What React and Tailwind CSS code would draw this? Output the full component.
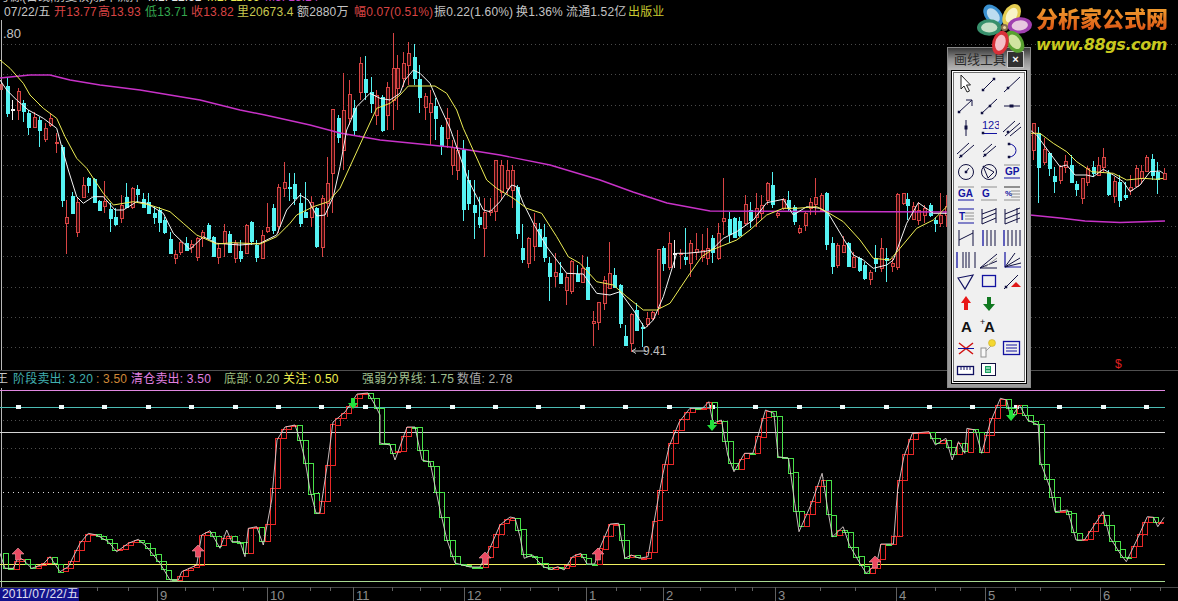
const candles = [
  [7,'c',78,86,113,117],[12,'w',100,109,110,120],[18,'r',88,91,110,120],[23,'c',100,103,111,122],[28,'c',110,113,127,135],[34,'r',112,117,127,128],[39,'c',117,120,130,147],[45,'r',123,128,139,142],[50,'r',113,118,125,127],[56,'r',133,142,143,153],
  [62,'c',145,147,200,207],[66,'r',200,217,223,254],[72,'c',192,196,213,213],[77,'r',198,202,232,237],[83,'r',177,185,197,198],[88,'c',177,178,185,193],[94,'c',178,179,202,202],[99,'c',200,201,210,211],[104,'r',181,201,206,213],[110,'c',203,209,218,232],
  [115,'c',208,217,224,226],[121,'r',195,205,218,223],[126,'c',183,197,207,207],[132,'r',187,188,207,209],[137,'c',185,189,194,203],[143,'c',193,199,207,207],[148,'c',193,202,213,214],[154,'c',207,213,217,224],[159,'c',207,210,222,232],[164,'c',217,220,232,234],
  [170,'c',232,239,253,253],[175,'r',250,254,258,264],[180,'r',240,242,252,255],[186,'c',237,243,250,251],[191,'r',240,244,247,253],[197,'r',237,238,257,261],[202,'r',230,232,238,247],[208,'c',223,225,238,239],[213,'c',236,237,256,256],[218,'r',243,248,257,264],
  [224,'r',224,231,243,257],[229,'c',231,234,252,252],[235,'r',240,243,258,263],[240,'c',240,251,258,262],[246,'r',224,225,253,254],[251,'c',221,222,241,245],[256,'c',240,245,257,262],[262,'r',230,235,258,258],[267,'r',203,227,231,233],[273,'c',204,208,230,234],
  [278,'r',184,187,226,233],[284,'r',162,182,188,197],[289,'c',173,187,188,201],[294,'c',173,184,198,205],[300,'c',193,203,223,227],[305,'c',182,212,217,217],[311,'r',196,202,217,227],[316,'c',207,208,246,248],[322,'r',195,198,247,257],[327,'r',157,183,203,217],
  [332,'r',109,109,173,213],[338,'c',115,118,137,143],[343,'r',73,110,150,170],[349,'r',80,94,118,125],[354,'c',100,108,130,135],[360,'r',57,63,92,100],[365,'c',56,79,92,100],[371,'c',77,92,103,113],[376,'r',90,95,115,125],[382,'c',95,97,130,132],
  [387,'r',82,87,115,130],[393,'r',33,68,100,130],[397,'r',55,68,88,110],[403,'r',52,63,78,87],[408,'r',42,53,65,85],[414,'c',44,57,78,85],[419,'c',65,79,97,113],[425,'r',93,96,107,120],[430,'r',90,103,112,145],[435,'c',98,106,118,140],
  [441,'c',125,127,145,155],[447,'r',108,118,138,148],[452,'r',140,147,165,175],[457,'r',130,150,170,180],[463,'c',140,150,209,221],[468,'c',170,180,203,210],[474,'c',180,205,212,239],[479,'c',197,217,224,228],[484,'r',198,212,228,257],[490,'r',198,210,212,216],
  [495,'r',160,160,211,221],[501,'r',160,165,192,200],[507,'r',160,170,188,195],[512,'r',165,170,190,208],[517,'c',185,187,233,239],[522,'c',224,248,259,263],[528,'r',237,238,263,268],[534,'r',213,223,246,261],[539,'c',223,229,246,247],[544,'c',224,237,257,262],
  [549,'c',257,263,276,301],[555,'r',253,272,276,287],[560,'c',262,273,283,284],[566,'r',273,277,290,305],[571,'r',260,261,291,294],[577,'c',265,274,281,282],[582,'r',255,268,282,283],[587,'c',257,267,299,300],[593,'r',311,321,323,346],[598,'r',302,302,322,330],
  [604,'r',276,280,303,310],[609,'r',242,273,288,289],[614,'c',268,275,287,287],[620,'c',284,285,323,328],[625,'c',325,336,345,346],[631,'r',313,314,343,352],[636,'c',303,310,330,331],[642,'c',323,327,328,347],[647,'r',312,318,324,327],[652,'r',311,312,318,320],
  [658,'r',249,249,307,315],[663,'c',246,248,263,271],[669,'r',232,243,267,270],[674,'w',240,253,254,268],[680,'r',249,253,254,269],[685,'c',228,257,259,265],[690,'r',240,243,263,277],[696,'r',233,249,252,260],[702,'r',234,250,257,262],[707,'r',228,248,258,265],
  [712,'c',235,238,252,263],[718,'r',223,233,258,260],[723,'r',178,218,221,235],[729,'c',212,219,234,243],[734,'c',217,218,237,238],[739,'c',217,221,235,237],[745,'r',195,204,223,225],[750,'c',202,210,220,228],[756,'r',193,208,217,227],[761,'r',195,205,213,220],
  [767,'r',182,183,200,205],[772,'c',172,185,204,208],[777,'r',210,213,215,218],[783,'r',198,199,208,210],[788,'c',191,200,208,212],[794,'c',205,207,221,225],[799,'r',225,228,232,234],[805,'r',212,213,225,231],[810,'r',198,202,208,215],[815,'r',178,197,204,215],
  [821,'r',193,195,210,212],[826,'c',192,193,244,250],[832,'c',237,243,266,274],[837,'r',243,245,265,268],[843,'r',236,245,252,253],[848,'c',242,243,266,267],[853,'r',252,257,267,268],[859,'c',257,258,270,272],[864,'c',262,265,278,280],[870,'r',270,272,279,285],
  [875,'c',245,258,263,272],[881,'r',238,248,268,272],[886,'c',248,258,260,282],[892,'r',258,263,266,272],[897,'r',193,194,267,270],[903,'r',193,193,203,205],[907,'c',193,199,205,220],[913,'r',202,206,219,220],[918,'r',202,210,220,225],[924,'r',205,208,215,223],
  [930,'c',203,205,215,217],[935,'c',217,220,223,232],[940,'r',193,215,223,227],[946,'r',195,206,215,227],[1033,'r',123,123,150,160],[1038,'c',127,133,167,203],[1044,'r',138,149,162,165],[1049,'c',152,153,168,176],[1054,'c',167,176,181,193],[1060,'r',165,166,180,184],
  [1065,'r',155,161,167,173],[1071,'c',155,165,182,183],[1076,'c',181,184,189,196],[1082,'r',178,178,198,204],[1087,'r',166,168,182,186],[1093,'c',161,167,173,177],[1098,'r',157,165,175,176],[1103,'r',148,157,167,172],[1108,'c',170,173,194,196],[1114,'r',177,181,196,203],
  [1119,'c',175,182,200,207],[1125,'c',182,195,197,200],[1130,'r',175,187,190,195],[1136,'r',165,168,186,187],[1141,'r',165,171,178,184],[1146,'r',155,157,171,172],[1152,'c',154,159,175,180],[1157,'c',162,172,179,194],[1164,'r',168,173,179,180],
]

const zoomed = (ox, oy, pts) => pts.map(([x, y]) => [ox + x / 3, oy + y / 3])
const toPoints = (pts) => pts.map(([x, y]) => `${x.toFixed(1)},${y.toFixed(1)}`).join(' ')

const magenta = [[0,78],[30,75],[50,75],[70,80],[100,85],[140,90],[170,95],[200,100],[240,110],[265,115],[310,125],[340,133],[380,140],[410,143],[450,147],[500,155],[550,165],[600,180],[633,192],[667,203],[710,211],[950,212],[1030,215],[1060,218],[1085,221],[1120,222.5],[1135,222],[1165,221]]

const whiteLine = [
  ...zoomed(0, 60, [[0,60],[20,90],[50,120],[85,150],[130,175],[170,205],[185,260],[205,330],[230,410],[250,430],[280,410],[310,410],[345,450],[370,450],[410,425],[440,430],[490,460],[520,520],[570,568],[610,530],[650,550],[720,555],[780,550],[830,525],[860,450],[900,405],[925,420],[950,468],[975,465],[1000,410],[1020,320]]),
  ...zoomed(0, 0, [[1040,390],[1070,320],[1110,280],[1140,295],[1170,300],[1200,280]]),
  ...zoomed(400, 0, [[15,240],[40,210],[60,220],[90,250],[120,320],[150,385]]),
  ...zoomed(400, 180, [[205,0],[230,50],[250,90],[270,95],[300,65],[335,15],[350,20],[370,70],[400,130],[440,200],[470,240],[500,280],[550,282],[590,340],[630,345],[660,335],[700,390],[735,445],[760,420],[790,350],[830,220],[860,220]]),
  ...zoomed(640, 160, [[190,275],[215,270],[250,235],[290,215],[340,180],[380,128],[430,118],[460,165],[500,140],[540,145],[565,160],[610,235],[640,285],[670,300],[700,325],[740,315],[760,300],[800,190],[835,128],[880,160],[920,160]]),
  ...zoomed(1020, 110, [[30,60],[50,75],[90,130],[120,170],[140,165],[165,195],[200,195],[220,200],[250,178],[280,195],[310,215],[330,245],[360,225],[390,185],[420,183],[430,190]]),
]

const yellowLine = [
  ...zoomed(0, 60, [[0,0],[30,25],[70,70],[90,105],[130,145],[170,175],[195,230],[230,295],[260,325],[310,400],[340,435],[400,425],[450,435],[510,455],[550,490],[590,525],[650,552],[700,548],[780,552],[830,530],[870,490],[890,465],[940,440],[985,425],[1020,385]]),
  ...zoomed(0, 0, [[1100,390],[1130,325],[1170,310],[1200,285]]),
  ...zoomed(400, 0, [[25,258],[60,258],[105,258],[140,280],[170,330],[190,385]]),
  ...zoomed(400, 180, [[260,0],[290,25],[340,55],[380,85],[425,100],[470,170],[505,230],[540,250],[590,305],[640,315],[680,350],[730,390],[770,390],[810,370]]),
  ...zoomed(640, 160, [[150,340],[185,290],[215,270],[290,240],[330,210],[380,165],[430,145],[470,145],[530,140],[560,155],[610,185],[660,240],[700,295],[750,300],[780,265],[830,205],[880,180],[920,140]]),
  ...zoomed(1020, 110, [[20,70],[60,70],[100,100],[140,125],[170,155],[215,185],[280,190],[320,210],[370,205],[410,208],[430,205]]),
]

// strength curve, read off the lower panel
const strength = [
  ...zoomed(0, 500, [[0,160],[15,205],[40,205],[55,170],[70,180],[95,205],[130,192],[150,170],[180,215],[205,200],[240,130],[265,100],[290,105],[325,125],[350,155],[385,130],[415,118],[440,140],[480,190],[510,240],[535,240],[545,215],[590,195],[605,105],[630,92],[660,145],[680,90],[695,125],[720,125],[735,170],[745,85],[770,80],[790,135],[815,0]]),
  [277,440],[285,427],[295,425],[300,440],[305,460],[310,490],[316,513],[320,513],[328,460],[333,422],[345,412],[350,405],[357,394],[368,393],[375,405],[380,415],[380,443],[390,445],[395,460],[407,427],[415,427],[422,460],[430,462],[440,510],[447,540],[455,563],[470,567],[480,567],[490,548],[500,525],[510,517],[515,518],
  ...[[0,470],[10,535],[30,525],[55,560],[75,568],[90,560],[105,570],[125,530],[145,520],[160,552],[178,552],[190,505],[215,432],[235,430],[250,535],[265,525],[285,535],[305,530],[330,350],[340,285],[355,200],[380,125],[405,85],[435,85],[450,65],[460,130],[480,120],[495,225],[510,275],[535,220],[555,220],[585,90],[605,100],[615,230],[640,235],[655,370],[665,455],[695,370],[720,280],[735,400],[745,470],[770,440],[785,495],[810,550],[825,580],[850,550],[860,492],[890,492],[900,330],[915,230],[935,160],[975,155],[990,195],[1015,175],[1030,240],[1045,185],[1060,220],[1065,145],[1085,150],[1100,220],[1120,130],[1145,55],[1160,60],[1170,115],[1190,75],[1210,120],[1235,135],[1240,245],[1265,330],[1275,395],[1305,390],[1325,480],[1345,480],[1390,395],[1405,470],[1430,520],[1445,545],[1470,480],[1495,410],[1510,412],[1520,440],[1535,412]].map(([x, y]) => [520 + x * 0.4196, 380 + y / 3]),
]

function sampleAt(x) {
  for (let i = 1; i < strength.length; i++) {
    const [x0, y0] = strength[i - 1]
    const [x1, y1] = strength[i]
    if (x <= x1) return x1 === x0 ? y1 : y0 + ((y1 - y0) * (x - x0)) / (x1 - x0)
  }
  return strength[strength.length - 1][1]
}

const bars = []
for (let x = 3, prev = sampleAt(0); x < 1162; x += 5.45) {
  const cur = sampleAt(x + 2.7)
  bars.push({ x: Math.round(x), prev, cur })
  prev = cur
}

const candleColor = { r: '#d84444', c: '#55f2f2', w: '#f4f4f4' }

function Candle({ d }) {
  const [x, kind, hi, top, bot, lo] = d
  const color = candleColor[kind]
  return (
    <g stroke={color} shapeRendering="crispEdges">
      <line x1={x + 0.5} x2={x + 0.5} y1={hi} y2={top} />
      <line x1={x + 0.5} x2={x + 0.5} y1={bot} y2={lo} />
      <rect x={x - 1} y={top + 0.5} width={3} height={Math.max(bot - top, 1)} fill={kind === 'r' ? '#3a0c0c' : color} />
    </g>
  )
}

function MainChart() {
  const dots = [44, 74, 105, 135, 165, 196, 226, 256, 287, 317, 347]
  return (
    <svg className="block w-full h-[350px]" viewBox="0 20 1178 350">
      {dots.map((y) => (
        <line key={y} x1="3" x2="1178" y1={y + 0.5} y2={y + 0.5} stroke="#4a4a4a" strokeDasharray="1 3" />
      ))}
      <line x1="1.5" x2="1.5" y1="20" y2="370" stroke="#b8b8b8" />
      <rect x="0" y="84" width="3" height="6" fill="#c86060" />
      <text x="3" y="38" fontSize="13" fill="#c4c4c4">.80</text>
      {candles.map((d) => (
        <Candle key={d[0]} d={d} />
      ))}
      <polyline points={toPoints(magenta)} fill="none" stroke="#c832c8" strokeWidth="1.4" />
      <polyline points={toPoints(whiteLine)} fill="none" stroke="#f4f4f4" strokeWidth="1" />
      <polyline points={toPoints(yellowLine)} fill="none" stroke="#eeee55" strokeWidth="1" />
      <path d="M646 351H632M632 351l4-2.5M632 351l4 2.5" stroke="#c8c8c8" fill="none" />
      <text x="643" y="355" fontSize="12" fill="#c0c0c0">9.41</text>
      <text x="1115" y="368" fontSize="12" fill="#e02020">$</text>
    </svg>
  )
}

function UpArrow({ x, y }) {
  return <path d={`M${x} ${y}l6 6h-3.5v6h-5v-6h-3.5z`} fill="#ec4a62" stroke="#f0a0a8" strokeWidth="0.6" />
}

function DownArrow({ x, y }) {
  return <path d={`M${x - 2} ${y}h4v5h3l-5 6-5-6h3z`} fill="#22e03c" />
}

function LowerChart() {
  const dots = [420, 448, 477, 506, 535]
  const marks = Array.from({ length: 27 }, (_, i) => 18 + i * 43.4)
  return (
    <svg className="block w-full h-[199px]" viewBox="0 388 1178 199">
      <line x1="1.5" x2="1.5" y1="388" y2="587" stroke="#b8b8b8" />
      {dots.map((y) => (
        <line key={y} x1="3" x2="1165" y1={y + 0.5} y2={y + 0.5} stroke="#4e4e4e" strokeDasharray="1 3" />
      ))}
      <line x1="3" x2="1165" y1="492.5" y2="492.5" stroke="#d8d8d8" strokeDasharray="1 4" />
      <g shapeRendering="crispEdges">
        <line x1="0" x2="1165" y1="390.5" y2="390.5" stroke="#e088e0" />
        <line x1="0" x2="1165" y1="407.5" y2="407.5" stroke="#4cbcb4" />
        <line x1="0" x2="1165" y1="432.5" y2="432.5" stroke="#d4d4d4" />
        <line x1="0" x2="1165" y1="564.5" y2="564.5" stroke="#f0f060" />
        <line x1="0" x2="1165" y1="581.5" y2="581.5" stroke="#a8d890" />
        {marks.map((x) => (
          <rect key={x} x={x - 2.5} y="405" width="5" height="4" fill="#f0f8f8" />
        ))}
        {bars.map((b) => (
          <rect
            key={b.x}
            x={b.x + 0.5}
            y={Math.round(Math.min(b.prev, b.cur)) + 0.5}
            width="5"
            height={Math.max(Math.round(Math.abs(b.cur - b.prev)), 1)}
            fill="none"
            stroke={b.cur < b.prev ? '#e82828' : '#48e048'}
          />
        ))}
      </g>
      <polyline points={toPoints(strength)} fill="none" stroke="#dcd0d0" strokeWidth="0.9" />
      <UpArrow x={18} y={548} />
      <UpArrow x={198} y={545} />
      <UpArrow x={485} y={552} />
      <UpArrow x={598} y={548} />
      <UpArrow x={875} y={556} />
      <DownArrow x={353} y={398} />
      <DownArrow x={712} y={420} />
      <DownArrow x={1011} y={410} />
    </svg>
  )
}

function DateAxis() {
  const long = [[157, '9'], [267, '10'], [353, '11'], [464, '12'], [586, '1'], [663, '2'], [775, '3'], [896, '4'], [985, '5'], [1100, '6']]
  const short = [97, 128, 185, 213, 243, 310, 330, 392, 420, 440, 500, 530, 558, 616, 640, 700, 735, 752, 820, 855, 935, 960, 1015, 1040, 1070, 1130, 1160]
  return (
    <svg className="block w-full h-[14px]" viewBox="0 587 1178 14">
      <g shapeRendering="crispEdges">
        <line x1="0" x2="1178" y1="587.5" y2="587.5" stroke="#484848" />
        {short.map((x) => (
          <line key={x} x1={x + 0.5} x2={x + 0.5} y1="587" y2="591" stroke="#606060" />
        ))}
        {long.map(([x]) => (
          <line key={x} x1={x + 0.5} x2={x + 0.5} y1="587" y2="601" stroke="#606060" />
        ))}
      </g>
      {long.map(([x, label]) => (
        <text key={x} x={x + 3} y="600" fontSize="13" fill="#8c8c8c">{label}</text>
      ))}
    </svg>
  )
}

function Logo() {
  const petals = [
    [-40, -11, -12, '#3a90d0', '#bcdcf0'],
    [30, 7, -12, '#e4cc50', '#f8f4c8'],
    [85, 15, -2, '#a040b0', '#e8c8e0'],
    [145, 10, 14, '#58a030', '#d0e4a0'],
    [195, -4, 15, '#d83038', '#f4c0c8'],
    [270, -15, 0, '#38906c', '#c8e0c8'],
  ]
  return (
    <div className="absolute top-0 left-[977px] z-20 flex items-start">
      <svg width="55" height="55" viewBox="-27 -27 54 54" className="shrink-0 overflow-visible">
        {petals.map(([a, x, y, outer, inner]) => (
          <g key={a} transform={`translate(${x} ${y}) rotate(${a})`}>
            <ellipse rx="8" ry="12" fill={outer} />
            <ellipse rx="5" ry="8" fill={inner} />
          </g>
        ))}
        <circle r="3.5" fill="#8a7050" />
        <circle r="1.5" fill="#f0d8a0" />
      </svg>
      <div className="flex flex-col ml-[4px] mt-[7px]">
        <span className="text-[22px] leading-[26px] font-black whitespace-nowrap text-transparent bg-clip-text bg-linear-to-b from-[#f0a030] to-[#d84810]">分析家公式网</span>
        <span className="text-[16px] leading-[18px] mt-[3px] font-bold italic whitespace-nowrap text-[#c8c81e] font-['DejaVu_Sans',sans-serif] tracking-[-0.4px]">www.88gs.com</span>
      </div>
    </div>
  )
}

const ink = '#1212a0'
const Dot = ({ x, y }) => <rect x={x - 1.25} y={y - 1.25} width="2.5" height="2.5" fill="#101040" stroke="none" />
const Grey = ({ y, x = 9 }) => <line x1={x} x2="18" y1={y} y2={y} stroke="#909090" />
const Label = ({ x = 2, y = 10, children }) => (
  <text x={x} y={y} fontSize="10" fontWeight="700" fill={ink}>{children}</text>
)

const toolIcons = [
  <path d="M5 1v14l3-3 3 6 2.5-1-3-6h4z" fill="#fff" stroke="#222" />,
  <g stroke="#101040"><line x1="4" y1="16" x2="15" y2="5" /><Dot x={4} y={16} /><Dot x={15} y={5} /></g>,
  <g stroke="#101040"><line x1="2" y1="18" x2="18" y2="3" /><Dot x={6} y={14} /></g>,
  <g stroke="#101040" fill="none"><line x1="3" y1="16" x2="16" y2="4" /><path d="M10 4h6v6" /><Dot x={3} y={16} /></g>,
  <g stroke="#101040"><line x1="2" y1="18" x2="18" y2="3" /><Dot x={3} y={17} /><Dot x={11} y={10} /></g>,
  <g stroke="#101040"><line x1="2" y1="10" x2="18" y2="10" /><rect x="7.5" y="8.5" width="4" height="3" fill="#101040" stroke="none" /></g>,
  <g stroke="#101040"><line x1="10" y1="2" x2="10" y2="18" /><rect x="8.5" y="7.5" width="3" height="4" fill="#101040" stroke="none" /></g>,
  <g><text x="3" y="11" fontSize="11" fill={ink}>123</text><line x1="3" y1="15.5" x2="18" y2="15.5" stroke={ink} /><Dot x={4} y={15} /></g>,
  <g stroke="#101040"><line x1="1" y1="14" x2="13" y2="3" /><line x1="3" y1="18" x2="18" y2="5" /><line x1="8" y1="18" x2="19" y2="9" /><Dot x={6} y={14} /></g>,
  <g stroke="#101040"><line x1="1" y1="14" x2="13" y2="3" /><line x1="3" y1="18" x2="18" y2="5" /><Dot x={5} y={16} /></g>,
  <g stroke="#101040"><line x1="4" y1="12" x2="13" y2="4" /><line x1="4" y1="17" x2="17" y2="6" /><Dot x={6} y={15} /></g>,
  <g fill="none" stroke={ink}><path d="M7 4a7 6.5 0 0 1 0 13" /><Dot x={7} y={4} /><Dot x={7} y={17} /></g>,
  <g fill="none" stroke="#101040"><circle cx="10" cy="10" r="7.5" /><path d="M10 10l3-4" /><Dot x={10} y={10} /></g>,
  <g fill="none" stroke="#101040"><circle cx="10" cy="10" r="7.5" /><path d="M4 4l11 6-6 6z" /></g>,
  <g><line x1="2" x2="18" y1="3" y2="3" stroke="#909090" /><Label x={3} y={13}>GP</Label><line x1="2" x2="18" y1="16" y2="16" stroke={ink} /></g>,
  <g><line x1="2" x2="18" y1="3" y2="3" stroke="#909090" /><Label x={2} y={13}>GA</Label><line x1="2" x2="18" y1="16" y2="16" stroke={ink} /></g>,
  <g><line x1="2" x2="18" y1="3" y2="3" stroke="#909090" /><Label x={3} y={13}>G</Label><line x1="2" x2="18" y1="16" y2="16" stroke="#909090" /></g>,
  <g><line x1="2" x2="18" y1="3" y2="3" stroke="#303030" /><text x="3" y="12" fontSize="8" fontWeight="700" fill={ink}>%</text><Grey y={7} /><Grey y={10} /><Grey y={13} /><Grey y={16} x={2} /></g>,
  <g><line x1="2" x2="18" y1="3" y2="3" stroke={ink} /><Label x={3} y={14}>T</Label><Grey y={7} /><Grey y={10} /><Grey y={13} /><line x1="2" x2="18" y1="17" y2="17" stroke={ink} /></g>,
  <g fill="none" stroke="#101040"><path d="M3 3v15M17 2v15" /><path d="M3 8l14-5M3 13l14-6M3 18l14-6" /></g>,
  <g fill="none" stroke="#101040"><path d="M3 3v15M15 2v15" /><path d="M3 8l15-6M3 13l15-6M3 18l15-6" /></g>,
  <g fill="none" stroke="#101040"><path d="M3 2v16M17 2v16M3 12l14-7" /></g>,
  <g stroke="#101040"><path d="M4 2v16" stroke={ink} strokeWidth="1.3" /><path d="M8 2v16M12 2v16M16 2v16" /></g>,
  <g stroke="#101040"><path d="M2 2v16" stroke={ink} strokeWidth="1.3" /><path d="M6 2v16M10 2v16M14 2v16M18 2v16" /></g>,
  <g stroke="#101040"><path d="M1 2v16" stroke={ink} strokeWidth="1.3" /><path d="M7 2v16M10 2v16M13 2v16M19 2v16" /></g>,
  <g fill="none" stroke="#101040"><path d="M1 18L18 4M1 18l17-7M1 18h17" /><path d="M5 18L18 8" stroke="#909090" /></g>,
  <g fill="none" stroke="#101040"><path d="M3 2v15h16" stroke={ink} strokeWidth="1.2" /><path d="M3 17L13 3M3 17l15-9M3 17l16-4" /></g>,
  <path d="M2 6l15-3-8 14z" fill="none" stroke="#101060" strokeWidth="1.2" />,
  <rect x="3.5" y="3.5" width="13" height="11" fill="none" stroke={ink} strokeWidth="1.3" />,
  <g><line x1="2" y1="17" x2="16" y2="3" stroke="#101040" /><Dot x={4} y={15} /><path d="M9 15l5-5 5 5z" fill="#e01818" /></g>,
  <path d="M10 2l5 7h-3v7H8V9H5z" fill="#e81818" />,
  <path d="M8 3h4v7h4l-6 7-6-7h4z" fill="#107820" />,
  null,
  <text x="5" y="16" fontSize="15" fontWeight="700" fill="#111">A</text>,
  <g fill="#111"><text x="1" y="9" fontSize="9">+</text><text x="5" y="16" fontSize="15" fontWeight="700">A</text></g>,
  null,
  <g stroke="#d01010" strokeWidth="1.5"><path d="M3 5l14 11M17 5L3 16" /><line x1="2" x2="18" y1="10.5" y2="10.5" stroke={ink} strokeWidth="1" /></g>,
  <g><path d="M2 18L16 4" stroke="#a0a0a0" /><rect x="2" y="10" width="5" height="9" fill="#f8f8f8" stroke="#909090" /><circle cx="13" cy="5" r="3.5" fill="#f4d830" stroke="#c0a020" strokeWidth="0.5" /></g>,
  <g fill="none" stroke={ink}><rect x="1.5" y="3.5" width="16" height="13" strokeWidth="1.3" /><path d="M4 7h11M4 10h11M4 13h11" /></g>,
  <g><rect x="1.5" y="6.5" width="16" height="8" fill="#fff" stroke="#101060" strokeWidth="1.3" /><path d="M5 7v3M8 7v3M11 7v3M14 7v3" stroke="#101060" /></g>,
  <g><rect x="2.5" y="3.5" width="14" height="12" fill="#fff" stroke="#101040" /><rect x="6" y="6" width="6" height="7" fill="#18a060" /><path d="M7 8h4M7 11h4" stroke="#fff" /></g>,
  null,
]

function DrawingTools() {
  return (
    <div className="absolute left-[947px] top-[47px] z-10 w-[84px] h-[341px] flex flex-col border border-[#8a8a8a] bg-[#9a9a9a]">
      <div className="flex items-center justify-between h-[24px] pl-[6px] pr-[6px] bg-linear-to-b from-[#3a3a3a] via-[#8c8c8c] to-[#b8b8b8]">
        <span className="text-[13px] leading-[15px] text-[#2a2a2a]">画线工具</span>
        <span className="flex items-center justify-center w-[17px] h-[17px] border border-[#c8c8c8] bg-[#303030] text-[11px] leading-none font-bold text-white">×</span>
      </div>
      <div className="flex-1 mx-[3px] mb-[3px] border border-black bg-white p-px">
        <div className="h-full border border-[#707070] border-b-black bg-[#f0f0f0] grid grid-cols-3 auto-rows-[22px] justify-items-center items-center">
          {toolIcons.map((icon, i) => (
            <svg key={i} width="20" height="20" viewBox="0 0 20 20">{icon}</svg>
          ))}
        </div>
      </div>
    </div>
  )
}

function App() {
  return (
    <div className="relative w-[1178px] h-[601px] overflow-hidden bg-black flex flex-col font-['Liberation_Sans','Noto_Sans_CJK_SC',sans-serif]">
      <div className="h-[5px] overflow-hidden shrink-0">
        <div className="flex -mt-[10px] text-[12px] leading-[15px] text-[#c8c8c8] whitespace-nowrap">
          <span className="w-[150px] shrink-0 -ml-[2px]">号源(日线,前复权)雅中流择</span>
          <span className="w-[59px] shrink-0 text-[#e8e8e8]">M1: 12.61</span>
          <span className="w-[58px] shrink-0 text-[#e8e850]">M2: 11.66</span>
          <span className="text-[#c840c8]">M3: 13.14</span>
        </div>
      </div>

      <div className="h-[15px] flex items-center shrink-0 text-[12px] tracking-[0.15px] leading-[15px] whitespace-nowrap pl-[4px]">
        <span className="w-[50px] text-[#c8c8c8]">07/22/五</span>
        <span className="w-[44px] text-[#d84444]">开13.77</span>
        <span className="w-[47px] text-[#d84444]">高13.93</span>
        <span className="w-[46px] text-[#35a850]">低13.71</span>
        <span className="w-[46px] text-[#d84444]">收13.82</span>
        <span className="w-[60px] text-[#c8c850]">里20673.4</span>
        <span className="w-[57px] text-[#c4c4c4]">额2880万</span>
        <span className="w-[80px] text-[#d84444]">幅0.07(0.51%)</span>
        <span className="w-[82px] text-[#c4c4c4]">振0.22(1.60%)</span>
        <span className="w-[50px] text-[#c4c4c4]">换1.36%</span>
        <span className="w-[62px] text-[#c4c4c4]">流通1.52亿</span>
        <span className="text-[#c8c830]">出版业</span>
      </div>

      <MainChart />

      <div className="h-[18px] shrink-0 border-t border-[#505050] flex items-center text-[12px] tracking-[0.2px] leading-[15px] whitespace-nowrap overflow-hidden">
        <span className="w-[12px] -ml-[4px] text-[#c8c8c8]">王</span>
        <span className="ml-[5px] w-[83px] text-[#40b0b0]">阶段卖出: 3.20</span>
        <span className="w-[35px] text-[#d08838]">: 3.50</span>
        <span className="w-[93px] text-[#e080e0]">清仓卖出: 3.50</span>
        <span className="w-[59px] text-[#a0c080]">底部: 0.20</span>
        <span className="w-[79px] text-[#f0f050]">关注: 0.50</span>
        <span className="w-[95px] text-[#a0c090]">强弱分界线: 1.75</span>
        <span className="text-[#a8a8a8]">数值: 2.78</span>
      </div>

      <LowerChart />

      <div className="relative shrink-0">
        <DateAxis />
        <span className="absolute left-0 bottom-0 h-[13px] w-[79px] pl-[2px] bg-[#12128c] text-[12px] tracking-[0.2px] leading-[13px] text-[#e0e0f0] whitespace-nowrap">2011/07/22/五</span>
      </div>

      <Logo />
      <DrawingTools />
    </div>
  )
}

export default App
